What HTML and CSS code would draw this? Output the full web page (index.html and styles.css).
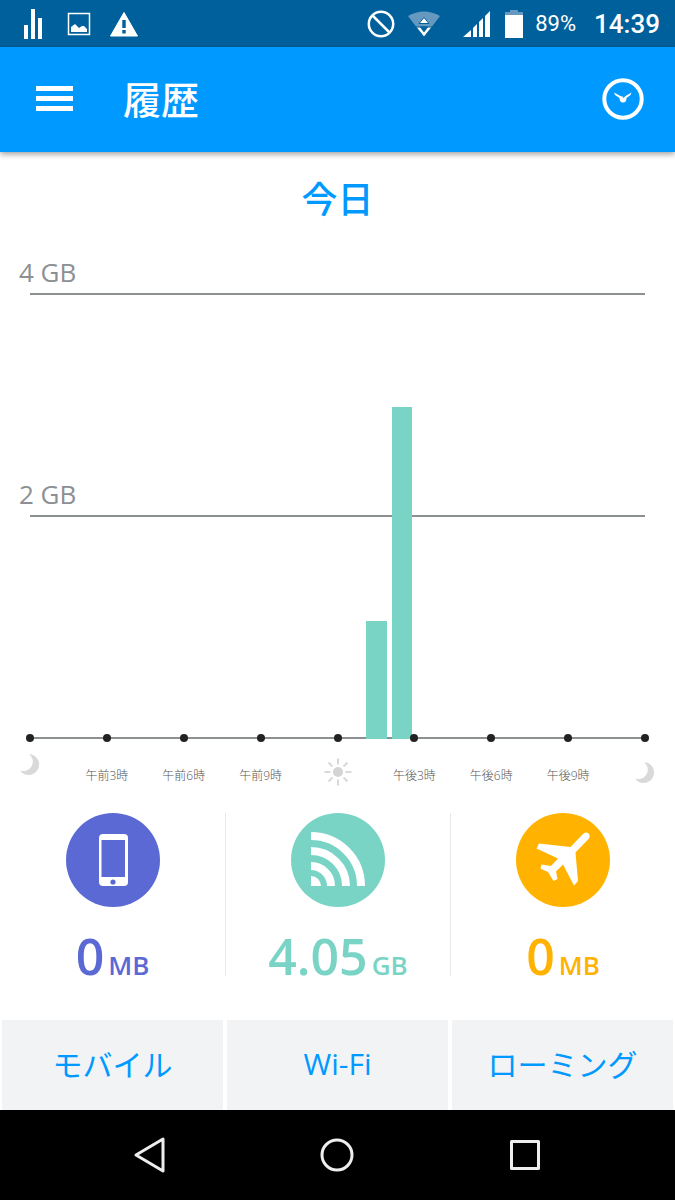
FILE: index.html
```html
<!DOCTYPE html>
<html lang="ja">
<head>
  <meta charset="UTF-8" />
  <meta name="viewport" content="width=device-width, initial-scale=1.0"/>
  <title>履歴</title>
  <link rel="stylesheet" href="styles.css">
</head>
<body>
  <div class="statusbar">
    <div class="notifications">
      <svg width="20" height="32" viewBox="0 0 20 32" fill="#fff">
        <path d="M1 17h4v14H1zM8 1h4v30H8zM15 10h4v21h-4z"/>
      </svg>
      <svg width="24" height="24" viewBox="0 0 24 24">
        <rect x="1.5" y="1.5" width="21" height="21" fill="none" stroke="#fff" stroke-width="1.5"/>
        <path d="M4 20v-5l4-3 4 4 3-2h2l3 3v3z" fill="#fff"/>
      </svg>
      <svg width="30" height="26" viewBox="0 0 30 26">
        <path d="M15 1.5L28.5 25h-27z" fill="#fff" stroke="#fff" stroke-linejoin="round"/>
        <path d="M13.3 9h3.4v8h-3.4zM13.3 19h3.4v3.5h-3.4z" fill="#00609b"/>
      </svg>
    </div>
    <div class="system">
      <svg width="28" height="28" viewBox="0 0 28 28" fill="none" stroke="#fff" stroke-width="2.5">
        <circle cx="14" cy="14" r="12.2"/>
        <path d="M5.5 5.5l17 17"/>
      </svg>
      <svg class="wifi" width="34" height="28" viewBox="0 0 34 28">
        <path d="M1 6Q17-3 33 6L17 27z" fill="#6699c0"/>
        <path d="M9 17h16l-8 10z" fill="#fff" stroke="#00609b"/>
        <path d="M17 22.5l4.5-6h-9z" fill="#00609b"/>
        <path d="M17 7.5l5 6H12z" fill="#fff" stroke="#00609b"/>
      </svg>
      <svg width="28" height="28" viewBox="0 0 28 28" fill="#fff">
        <path d="M0 27l8-7v7zM10 18l4-4v13h-4zM16 12l4-4v19h-4zM22 6l5-5v26h-5z"/>
      </svg>
      <svg class="battery" width="18" height="28" viewBox="0 0 18 28">
        <path d="M5 0h8v2h5v4H0V2h5z" fill="#6699c0"/>
        <path d="M0 5h18v23H0z" fill="#fff"/>
      </svg>
      <span class="percent">89%</span>
      <span class="clock">14:39</span>
    </div>
  </div>

  <header>
    <button class="icon-btn" aria-label="メニュー">
      <svg width="38" height="26" viewBox="0 0 38 26" fill="#fff">
        <path d="M1 0h37v5H1zM1 10h37v5H1zM1 20h37v5H1z"/>
      </svg>
    </button>
    <h1>履歴</h1>
    <button class="icon-btn" aria-label="期間">
      <svg width="42" height="42" viewBox="0 0 42 42">
        <circle cx="21" cy="21" r="18.7" fill="none" stroke="#fff" stroke-width="4"/>
        <path d="M12 14.5l6.5 3.5q2.5 1 5 0l6-3.500-1 2.500-4 3q0 4.500-3.500 4.500t-3.500-4.500l-4.500-3z" fill="#fff"/>
        <path d="M21 19.500l2-2" stroke="#0099ff" stroke-width="1.200"/>
      </svg>
    </button>
  </header>

  <main>
    <h2>今日</h2>

    <section class="chart">
      <div class="plot">
        <div class="scale">
          <div class="line top"><span>4 GB</span></div>
          <div class="line"><span>2 GB</span></div>
          <div class="line"></div>
        </div>
        <div class="bars" id="bars"></div>
      </div>
      <ul class="axis">
        <li><svg class="moon early" width="22" height="22" viewBox="0 0 22 22"><path d="M10 0a10.500 10.500 0 1 1-9 16.500a9.500 9.500 0 0 0 9-16.500z" fill="#d9d9d9"/></svg></li>
        <li><span>午前3時</span></li>
        <li><span>午前6時</span></li>
        <li><span>午前9時</span></li>
        <li>
          <svg class="sun" width="28" height="28" viewBox="0 0 28 28">
            <circle cx="14" cy="14" r="5" fill="#d4d4d4"/>
            <path d="M14 .5v6M14 21.5v6M.5 14h6M21.5 14h6M4.5 4.5l4 4M19.5 19.5l4 4M4.5 23.5l4-4M19.5 8.5l4-4" stroke="#d9d9d9" stroke-width="2"/>
          </svg>
        </li>
        <li><span>午後3時</span></li>
        <li><span>午後6時</span></li>
        <li><span>午後9時</span></li>
        <li><svg class="moon" width="22" height="22" viewBox="0 0 22 22"><path d="M10 0a10.500 10.500 0 1 1-9 16.500a9.500 9.500 0 0 0 9-16.500z" fill="#d9d9d9"/></svg></li>
      </ul>
    </section>

    <section class="totals">
      <div class="total mobile">
        <svg width="94" height="94" viewBox="0 0 94 94">
          <circle cx="47" cy="47" r="47" fill="#5b69d4"/>
          <rect x="33" y="21" width="29" height="52" rx="4" fill="#fff"/>
          <path d="M35.5 27h23.5v37H35.5z" fill="#5b69d4"/>
          <circle cx="47" cy="69" r="2.6" fill="#5b69d4"/>
        </svg>
        <p><span>0</span><small>MB</small></p>
      </div>
      <div class="total wifi-total">
        <svg width="94" height="94" viewBox="0 0 94 94">
          <circle cx="47" cy="47" r="47" fill="#79d4c5"/>
          <path d="M20 63a10 10 0 0 1 10 10H20z" fill="#fff"/>
          <path d="M20 53a20 20 0 0 1 20 20M20 38a35 35 0 0 1 35 35M20 23a50 50 0 0 1 50 50" fill="none" stroke="#fff" stroke-width="8"/>
        </svg>
        <p><span>4.05</span><small>GB</small></p>
      </div>
      <div class="total roaming">
        <svg width="94" height="94" viewBox="0 0 94 94">
          <circle cx="47" cy="47" r="47" fill="#ffb300"/>
          <path d="M67.5 20.5q3-2 5 0t.5 5L59.500 39.5 62 68 58 72.500 47 51.500 40 58.500 41.500 66 37.500 68 32 59 24.500 55.500 25.500 51.500 35 53 42 45.500 20.500 35.500 23 30.500 54.500 34z" fill="#fff"/>
        </svg>
        <p><span>0</span><small>MB</small></p>
      </div>
    </section>

    <div class="tabs">
      <button>モバイル</button>
      <button>Wi-Fi</button>
      <button>ローミング</button>
    </div>
  </main>

  <nav>
    <button aria-label="戻る">
      <svg width="38" height="38" viewBox="0 0 38 38"><path d="M32 3v32L5 19z"/></svg>
    </button>
    <button aria-label="ホーム">
      <svg width="38" height="38" viewBox="0 0 38 38"><circle cx="19" cy="19" r="15"/></svg>
    </button>
    <button aria-label="アプリ履歴">
      <svg width="38" height="38" viewBox="0 0 38 38"><rect x="5.5" y="5.5" width="27" height="27"/></svg>
    </button>
  </nav>

  <script>
    // GB used in each hour of the day
    const usage = [0, 0, 0, 0, 0, 0, 0, 0, 0, 0, 0, 0, 0, 1.06, 2.99, 0, 0, 0, 0, 0, 0, 0, 0, 0];
    const max = 4;
    const bars = document.getElementById('bars');

    usage.forEach(gb => {
      const bar = document.createElement('div');
      bar.className = 'bar';
      bar.style.height = (gb / max * 100) + '%';
      bars.appendChild(bar);
    });
  </script>
</body>
</html>
```
FILE: styles.css
```css
* { box-sizing: border-box; }
body {
  font-family: "Open Sans", "Noto Sans CJK JP", sans-serif;
  margin: 0;
  min-height: 100vh;
  display: flex;
  flex-direction: column;
  background-color: #fff;
}
svg {
  display: block;
  flex-shrink: 0;
}
button {
  font-family: inherit;
  border: none;
  padding: 0;
  background: none;
  cursor: pointer;
}

/* status bar */
.statusbar {
  height: 47px;
  padding: 0 15px 0 23px;
  display: flex;
  justify-content: space-between;
  align-items: center;
  background-color: #00609b;
  color: #fff;
  font-family: Roboto, sans-serif;
}
.notifications {
  display: flex;
  align-items: center;
  gap: 18px;
}
.notifications svg:first-child {
  margin-right: 6px;
}
.system {
  display: flex;
  align-items: center;
}
.system .wifi {
  margin: 0 22px 0 12px;
}
.system .battery {
  margin: 0 12px 0 14px;
}
.percent {
  font-size: 22px;
}
.clock {
  font-size: 26px;
  line-height: 32px;
  font-weight: 500;
  margin-left: 18px;
}

/* app bar */
header {
  height: 105px;
  padding: 0 31px 2px 35px;
  display: flex;
  align-items: center;
  background-color: #0099ff;
  color: #fff;
  box-shadow: 0 2px 6px rgba(0, 0, 0, 0.4);
}
h1 {
  flex: 1;
  margin: 0 0 0 50px;
  font-size: 38px;
  line-height: 48px;
  font-weight: 500;
}

main {
  flex: 1;
  display: flex;
  flex-direction: column;
}
h2 {
  margin: 24px 0 0;
  text-align: center;
  font-size: 36px;
  line-height: 48px;
  font-weight: 500;
  color: #0099ff;
}

/* chart */
.chart {
  margin: 34px 30px 0;
}
.plot {
  display: grid;
}
.scale, .bars {
  grid-area: 1 / 1;
}
.line {
  height: 222px;
  border-bottom: 2px solid #8c9090;
  display: flex;
  align-items: flex-end;
}
.line.top {
  height: 37px;
}
.line span {
  margin-left: -11px;
  font-size: 26px;
  line-height: 42px;
  color: #8c9094;
}
.bars {
  align-self: end;
  height: 444px;
  display: grid;
  grid-template-columns: repeat(24, 1fr);
  align-items: end;
}
.bar {
  margin: 0 2px 0 3px;
  background-color: #79d4c5;
}
.axis {
  list-style: none;
  margin: -5px -4px 0;
  padding: 0;
  height: 70px;
  display: flex;
  justify-content: space-between;
  position: relative;
}
.axis li {
  width: 8px;
  display: flex;
  flex-direction: column;
  align-items: center;
}
.axis li::before {
  content: "";
  width: 8px;
  height: 8px;
  border-radius: 50%;
  background-color: #222;
}
.axis span {
  margin-top: 24px;
  font-size: 12px;
  line-height: 20px;
  font-weight: 300;
  white-space: nowrap;
  color: #555;
}
.axis .sun {
  margin-top: 16px;
}
.axis .moon {
  margin-top: 20px;
}
.axis .early {
  margin-top: 12px;
}

/* totals */
.totals {
  margin-top: 9px;
  display: grid;
  grid-template-columns: repeat(3, 1fr);
}
.total {
  height: 163px;
  display: flex;
  flex-direction: column;
  align-items: center;
}
.total + .total {
  border-left: 1px solid #e6e8ea;
}
.total p {
  margin: 19px 0 0;
  display: flex;
  align-items: baseline;
  gap: 4px;
  font-size: 50px;
  line-height: 60px;
  font-weight: 600;
  white-space: nowrap;
}
.total small {
  font-size: 26px;
  line-height: 32px;
}
.mobile { color: #5b69d4; }
.wifi-total { color: #79d4c5; }
.roaming { color: #ffb300; }

.tabs {
  margin-top: auto;
  padding: 0 2px;
  display: grid;
  grid-template-columns: repeat(3, 1fr);
  gap: 4px;
}
.tabs button {
  height: 90px;
  padding-bottom: 4px;
  font-size: 30px;
  color: #0099ff;
  background-color: #f1f3f5;
}

/* android navigation */
nav {
  height: 90px;
  padding: 0 56px;
  display: grid;
  grid-template-columns: repeat(3, 1fr);
  justify-items: center;
  align-items: center;
  background-color: #000;
}
nav svg {
  fill: none;
  stroke: #eee;
  stroke-width: 3;
  stroke-linejoin: round;
}
```
